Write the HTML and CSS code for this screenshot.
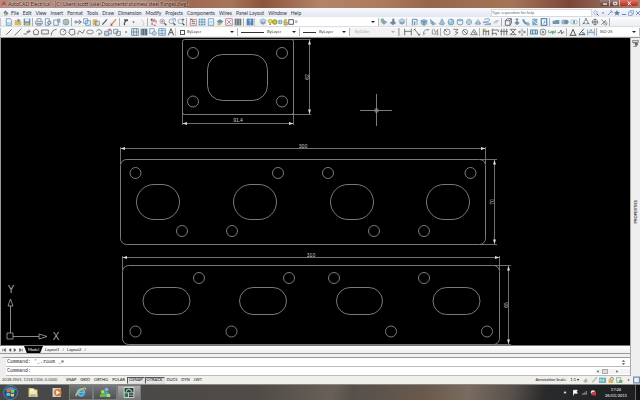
FILE: index.html
```html
<!DOCTYPE html>
<html lang="en">
<head>
<meta charset="utf-8">
<title>AutoCAD Electrical</title>
<link rel="stylesheet" href="styles.css">
</head>
<body>
<header class="titlebar">
  <svg class="app-icon" viewBox="0 0 12 12"><path d="M1 10 6 1l5 9H8L6 6l-2 4z" fill="#b9412f"/><path d="M3 11h7" stroke="#e9d8ae"/></svg>
  <h1 class="title">AutoCAD Electrical - [C:\Users\scott\luke\Documents\stainless steel flanges.dwg]</h1>
  <div class="window-buttons">
    <button aria-label="Minimise"><svg viewBox="0 0 12 8"><path d="M3 5h6" stroke="#fff" stroke-width="2"/></svg></button>
    <button aria-label="Restore"><svg viewBox="0 0 12 8"><path d="M4 2h5v4H4z" fill="none" stroke="#fff" stroke-width="1.5"/></svg></button>
    <button class="close" aria-label="Close"><svg viewBox="0 0 12 8"><path d="m4 1 5 6M9 1 4 7" stroke="#fff" stroke-width="1.6"/></svg></button>
  </div>
</header>

<nav class="menubar">
  <svg class="doc-icon" viewBox="0 0 12 12"><path d="M1 5 5 1l6 6-5 4z" fill="#3f83bd"/><path d="M2 11 5 4l4 7z" fill="#e3b23c"/></svg>
  <button>File</button><button>Edit</button><button>View</button><button>Insert</button><button>Format</button><button>Tools</button><button>Draw</button><button>Dimension</button><button>Modify</button><button>Projects</button><button>Components</button><button>Wires</button><button>Panel Layout</button><button>Window</button><button>Help</button>
  <input class="help-box" type="text" placeholder="Type a question for help" aria-label="Type a question for help">
  <div class="help-tools" data-icons="find drop tool star min restore x"></div>
</nav>

<div class="toolbar">
  <span class="grip"></span>
  <div class="tools" data-icons="new open save | print preview publish globe | cut copy paste brush match | undo drop redo | pan zoomin zoomwin zoomprev | props grid sheet markup calc block | help"></div>
  <span class="grip"></span>
  <div class="tools" data-icons="layers"></div>
  <label class="combo layer-combo"><svg class="layer-state" viewBox="0 0 36 10"><circle cx="4" cy="4" r="2.5" fill="#f4e34d" stroke="#8b8428" stroke-width=".7"/><path d="M3 7h2v2H3z" fill="#777"/><circle cx="10" cy="5" r="3" fill="#cbc631" stroke="#807d1e"/><circle cx="17" cy="5" r="3" fill="#6d93a5"/><path d="M17 1v8M13 5h8" stroke="#d5e7ef"/><path d="M22 5h4v4h-4zM22 5V3q2-3 4 0" fill="#dfd256" stroke="#77733a" stroke-width=".8"/><path d="M28 2h6v6h-6z" fill="#fff" stroke="#333"/></svg>
    <select aria-label="Layer"><option>0</option></select></label>
  <div class="tools" data-icons="layprev layiso layers"></div>
  <span class="grip"></span>
  <div class="tools" data-icons="poly box wedge cone sphere cyl torus pyr helix plane | extrude press sweep loft revolve | union subtract intersect | orbit pan3 move3 |"></div>
</div>

<div class="toolbar">
  <span class="grip"></span>
  <div class="tools" data-icons="line ray pline hexagon rect arc circle cloud spline ellipse earc insert make point hatch grad region table text"></div>
  <span class="grip"></span>
  <label class="combo color-combo"><span class="swatch"></span><select aria-label="Colour"><option>ByLayer</option></select></label>
  <label class="combo linetype-combo"><span class="rule"></span><select aria-label="Line type"><option>ByLayer</option></select></label>
  <label class="combo weight-combo"><span class="rule"></span><select aria-label="Line weight"><option>ByLayer</option></select></label>
  <label class="combo plot-combo"><select aria-label="Plot style" disabled><option>ByColor</option></select></label>
  <span class="grip"></span>
  <div class="tools" data-icons="dlin dalign darc dord | drad djog ddia dang | quick dbase dcont dspace dbreak | tol center inspect jogl | dedit dtedit dupd |"></div>
  <label class="combo style-combo"><select aria-label="Dimension style"><option>ISO-25</option></select></label>
</div>

<div class="workspace">
  <main class="editor">
    <svg class="drawing" viewBox="1 38 629 308" preserveAspectRatio="xMinYMin slice" role="img" aria-label="Flange drawings">
      <defs>
        <marker id="tip" viewBox="0 0 6 4" refX="6" refY="2" markerWidth="5" markerHeight="3" orient="auto-start-reverse" markerUnits="userSpaceOnUse"><path d="M0 0 6 2 0 4z" fill="#ddd"/></marker>
      </defs>
      <g class="part">
        <rect x="182.500" y="39.500" width="111" height="75" rx="2"/>
        <rect x="207.500" y="54.500" width="60" height="46" rx="15"/>
        <circle cx="193" cy="53" r="5.500"/><circle cx="282" cy="53" r="5.500"/><circle cx="193" cy="101.500" r="5.500"/><circle cx="282" cy="101.500" r="5.500"/>
      </g>
      <g class="part">
        <rect x="120.500" y="159.500" width="365" height="85" rx="6"/>
        <rect x="136.500" y="184.500" width="43" height="35" rx="17.500"/><rect x="233.500" y="184.500" width="43" height="35" rx="17.500"/><rect x="330.500" y="184.500" width="43" height="35" rx="17.500"/><rect x="426.500" y="184.500" width="43" height="35" rx="17.500"/>
        <circle cx="135.500" cy="173" r="5.500"/><circle cx="278" cy="173" r="5.500"/><circle cx="328" cy="173" r="5.500"/><circle cx="470.500" cy="173" r="5.500"/>
        <circle cx="182" cy="231" r="5.500"/><circle cx="232" cy="231" r="5.500"/><circle cx="374" cy="231" r="5.500"/><circle cx="424" cy="231" r="5.500"/>
      </g>
      <g class="part">
        <rect x="122.500" y="265.500" width="377" height="79" rx="6"/>
        <rect x="143" y="287.500" width="47" height="27" rx="13.500"/><rect x="239.500" y="287.500" width="47" height="27" rx="13.500"/><rect x="336.500" y="287.500" width="46" height="27" rx="13.500"/><rect x="433" y="287.500" width="47" height="27" rx="13.500"/>
        <circle cx="199" cy="278" r="5.500"/><circle cx="289" cy="278" r="5.500"/><circle cx="334" cy="278" r="5.500"/><circle cx="424" cy="278" r="5.500"/>
        <circle cx="135.500" cy="331.500" r="5.500"/><circle cx="231.500" cy="331.500" r="5.500"/><circle cx="391" cy="331.500" r="5.500"/><circle cx="487" cy="331.500" r="5.500"/>
      </g>
      <g class="extension">
        <path d="M182.500 112v13M293.500 112v13M291 39.500h20M291 114.500h20"/>
        <path d="M120.500 164v-17M485.500 164v-17M480 159.500h17M480 244.500h17"/>
        <path d="M122.500 270v-14M499.500 270v-14M494 265.500h17M494 344.500h17"/>
      </g>
      <g class="dimension">
        <path d="M182.500 123.500h111"/><path d="M309.500 40v74"/>
        <path d="M120.500 148.500h365"/><path d="M494.500 160v84"/>
        <path d="M122.500 257.500h377"/><path d="M508.500 266v78"/>
      </g>
      <g class="label">
        <text x="238" y="122">91.4</text>
        <text transform="translate(309 77) rotate(-90)">62</text>
        <text x="303" y="148">300</text>
        <text transform="translate(494 202) rotate(-90)">70</text>
        <text x="311" y="257">310</text>
        <text transform="translate(508 305) rotate(-90)">65</text>
      </g>
      <path class="cursor" d="M360 110.500h32M376.500 94v32M375 109h3v3h-3z"/>
      <g class="ucs">
        <path d="M7 333h6v6H7zM10.500 333v-27M8 306h5l-2.500-7zM13 336.500h26M39 334v5l8-2.500z"/>
        <text x="11" y="293">Y</text><text x="56" y="340">X</text>
      </g>
    </svg>
    <div class="sheet-tabs">
      <div class="tab-nav">
        <button aria-label="First"><svg viewBox="0 0 8 8"><path d="M1 1v6M7 1 3 4l4 3z"/></svg></button>
        <button aria-label="Previous"><svg viewBox="0 0 8 8"><path d="M6 1 2 4l4 3z"/></svg></button>
        <button aria-label="Next"><svg viewBox="0 0 8 8"><path d="m2 1 4 3-4 3z"/></svg></button>
        <button aria-label="Last"><svg viewBox="0 0 8 8"><path d="m1 1 4 3-4 3zM7 1v6"/></svg></button>
      </div>
      <button class="tab active">Model</button>
      <button class="tab">Layout1</button><span class="slash">/</span>
      <button class="tab">Layout2</button><span class="slash">/</span>
    </div>
    <section class="command">
      <div class="history"><span>Command: '_.zoom _e</span><svg class="spin" viewBox="0 0 6 8"><path d="m1 3 2-2 2 2zM1 5l2 2 2-2z"/></svg></div>
      <div class="prompt"><label for="cmd">Command:</label><input id="cmd" type="text">
        <div class="hscroll"><svg viewBox="0 0 6 6"><path d="M4 1 1 3l3 2z"/></svg><span class="thumb"></span><svg viewBox="0 0 6 6"><path d="m2 1 3 2-3 2z"/></svg></div></div>
    </section>
  </main>
  <aside class="palette">
    <svg viewBox="0 0 12 12"><path d="M1 1h10v3H1zM2 5h5v6H2M8 5v6" fill="none" stroke="#444"/><path d="M5 5h5v4H5z" fill="#666"/></svg>
    <h2>PROPERTIES</h2>
  </aside>
</div>

<div class="status">
  <output class="coords">2038.3945, 1338.1306, 0.0000</output>
  <button>SNAP</button><button>GRID</button><button>ORTHO</button><button>POLAR</button><button class="on">OSNAP</button><button class="on">OTRACK</button><button>DUCS</button><button>DYN</button><button>LWT</button>
  <div class="scale"><span>Annotation Scale:</span><button>1:1 ▾</button></div>
  <div class="status-tools" data-icons="annot annotadd comm lock tray drop clean"></div>
</div>

<footer class="taskbar">
  <button class="orb" aria-label="Start"><svg viewBox="0 0 16 16"><circle cx="8" cy="8" r="7.500" fill="#1e4f78" stroke="#8aa6b5" stroke-width=".6"/><path d="M2 5q6-6 12 0-6 3-12 0" fill="#79abc5" opacity=".7"/><path d="M4 5q2-1.500 3.500-.3V8Q5.500 7 3.500 8z" fill="#e5663b"/><path d="M8.300 5q2 1 4-.2L12 8q-2 1-3.700 0z" fill="#8fc755"/><path d="M3.500 8.800q2-1 4 0v3Q6 11 4 12z" fill="#63b8ec"/><path d="M8.300 9q2 1 3.700 0l-.5 3q-1.500.8-3.200 0z" fill="#f4cf4c"/></svg></button>
  <button aria-label="Explorer"><svg viewBox="0 0 16 16"><path d="M2 2h6l1 2h5v10H2z" fill="#d8b65c"/><path d="M3 5h10v7H3z" fill="#f7e9ae"/><path d="M4 3h6v3H4z" fill="#eaf3e4"/><path d="M3 10h11v4H3z" fill="#e7ca73"/><path d="M5 11h6v3H5z" fill="#8dbad0"/></svg></button>
  <button aria-label="Media player"><svg viewBox="0 0 16 16"><path d="M2 2h11v12H2z" fill="#b9cbd8"/><path d="M3 3h9v10H3z" fill="#d9e2e7"/><circle cx="9" cy="8" r="5" fill="#de7a2b"/><path d="m7 5 5 3-5 3z" fill="#fff"/></svg></button>
  <button class="running" aria-label="Internet Explorer"><svg viewBox="0 0 16 16"><path d="M12 10a4.500 4.500 0 1 1 .5-2H5" fill="none" stroke="#58bdf0" stroke-width="2.600"/><path d="M2 13Q-1 10 8 4q7-4 6 0" fill="none" stroke="#edc64b" stroke-width="1.500"/></svg></button>
  <button class="running" aria-label="Messenger"><svg viewBox="0 0 16 16"><circle cx="10" cy="4" r="2.500" fill="#71b8d9"/><path d="M6 13q0-6 4-6t4 6z" fill="#4e9dc5"/><circle cx="5" cy="7" r="2.500" fill="#a6dc62"/><path d="M1 14q0-5 4-5t4 5z" fill="#6dbb3b"/><path d="M10 10h5v4h-5z" fill="#a5e074"/></svg></button>
  <button class="running current" aria-label="AutoCAD"><svg viewBox="0 0 16 16"><path d="M1 1h14v14H1z" fill="#e9efed"/><path d="M2 2h12v6H2z" fill="#284238"/><path d="M4 7q3-7 8 0" fill="none" stroke="#9bd49f" stroke-width="1.500"/><path d="M2 9h5v5H2z" fill="#2a7051"/><path d="M8 10h6M8 13h6" stroke="#24332d" stroke-width="2"/></svg></button>
  <div class="tray">
    <svg viewBox="0 0 8 8"><path d="m2 5 2-3 2 3z" fill="#eee"/></svg>
    <svg viewBox="0 0 8 8"><path d="M2 1v7M2 1h5L6 3l1 2H2" fill="#fff" stroke="#fff"/></svg>
    <svg viewBox="0 0 8 8"><path d="M1 6h1M3 5v2M5 4v3M7 2v5" stroke="#ccc"/></svg>
    <svg viewBox="0 0 8 8"><circle cx="4" cy="4" r="3" fill="#eee"/><path d="M4 3h4v5H4L1 5z" fill="#cf3540"/></svg>
  </div>
  <div class="clock"><span>17:24</span><span>26/01/2011</span></div>
  <button class="desktop" aria-label="Show desktop"></button>
</footer>
<script src="icons.js"></script>
</body>
</html>
```
FILE: styles.css
```css
* { box-sizing: border-box; }
html, body { height: 100%; }
body {
  margin: 0;
  display: flex;
  flex-direction: column;
  font: 5px/8px Lato, "Liberation Sans", sans-serif;
  color: #333;
  background: #f0f0f0;
  overflow: hidden;
}
button, input, select { font: inherit; color: inherit; border: 0; padding: 0; margin: 0; background: none; border-radius: 0; outline: 0; }
button { display: flex; align-items: center; justify-content: center; white-space: nowrap; }
svg { display: block; }
h1, h2 { margin: 0; font: inherit; }

.titlebar {
  display: flex;
  flex: none;
  height: 8px;
  gap: 1px;
  padding-left: 1px;
  background: linear-gradient(90deg, #b3897f 0%, #b58c80 22%, #9c6951 29%, #a77559 36%, #8b543b 41%, #b38468 50%, #ad7a5c 60%, #96664c 67%, #a57557 80%, #7b4738 89%, #a98470 100%);
}
.app-icon { width: 6px; height: 7px; }
.title { flex: 1; color: #2e1c1a; text-shadow: 0 0 2px #f1dcd5, 0 0 3px #f1dcd5; }
.window-buttons { display: flex; height: 6px; margin-right: 2px; border-radius: 0 0 2px 2px; overflow: hidden; }
.window-buttons button { width: 10px; background: linear-gradient(#a3827a, #5d413f); border-right: 1px solid #cdb8b0; }
.window-buttons svg { width: 8px; height: 5px; }
.window-buttons .close { width: 18px; background: linear-gradient(#d9766a, #b32d20); border: 0; }

.menubar { display: flex; flex: none; height: 9px; align-items: center; gap: 4px; padding-left: 3px; background: linear-gradient(#f7f8fc, #e3e7f3); }
.menubar > button { height: 8px; }
.doc-icon { width: 6px; height: 8px; margin-right: -2px; }
.help-box { width: 101px; height: 8px; margin-left: auto; background: #fff; border: 1px solid #d5d9e4; font-size: 4px; line-height: 6px; }
.help-box::placeholder { color: #666; opacity: 1; }
.help-tools { display: flex; width: 48px; margin-left: -4px; justify-content: space-between; }

.toolbar { display: flex; flex: none; height: 10px; align-items: center; background: linear-gradient(#fbfbfc, #eceef1); border-bottom: 1px solid #dcdee2; }
.toolbar + .toolbar { height: 11px; border-bottom-color: #999; }
.grip { flex: none; width: 3px; height: 8px; margin-right: 1px; border-left: 1px solid #c3c6cc; }
.tools { display: flex; flex: none; align-items: center; }
.tool { width: 9px; height: 9px; flex: none; }
.tool svg { width: 8px; height: 8px; opacity: 0.8; }
.tool.small { width: 7px; }
.help-tools .tool, .status-tools .tool { width: 7px; }
.help-tools .tool svg { width: 6px; height: 6px; }
.divider { flex: none; width: 1px; height: 8px; margin: 0 1px; background: #aaaeb5; }

.combo { position: relative; display: flex; flex: none; align-items: center; height: 8px; background: #fff; border-right: 1px solid #b5b8be; font-size: 4px; }
.combo::after { content: ""; position: absolute; right: 3px; top: 3px; border: 2px solid transparent; border-top-color: #222; border-bottom: 0; pointer-events: none; }
.combo select { appearance: none; flex: 1; min-width: 0; height: 8px; padding-left: 2px; line-height: 8px; }
.layer-combo { width: 112px; }
.layer-combo select { padding-left: 0; }
.layer-state { width: 28px; height: 8px; }
.color-combo { width: 59px; }
.swatch { width: 5px; height: 5px; margin-left: 1px; border: 1px solid #555; }
.linetype-combo { width: 62px; }
.weight-combo { width: 50px; }
.rule { width: 23px; height: 1px; margin: 0 1px 0 3px; background: #333; }
.weight-combo .rule { width: 13px; }
.plot-combo { width: 49px; background: #f2f2f2; color: #aaa; }
.plot-combo select { padding-left: 5px; opacity: 1; }
.plot-combo::after { border-top-color: #aaa; }
.style-combo { flex: 1; }

.workspace { display: flex; flex: 1; min-height: 0; }
.editor { display: flex; flex: 1; flex-direction: column; min-width: 0; }
.drawing { flex: 1; width: 100%; min-height: 0; background: #000; border-left: 1px solid #999; }
.part { fill: none; stroke: #989898; stroke-width: 0.8px; }
.extension, .dimension { fill: none; stroke: #8b8b8b; stroke-width: 0.8px; }
.dimension path { marker-start: url(#tip); marker-end: url(#tip); }
.label { fill: #ccc; font: 5px "Liberation Sans", sans-serif; text-anchor: middle; }
.cursor { fill: none; stroke: #999; stroke-width: 0.8px; }
.ucs { fill: none; stroke: #aaa; stroke-width: 0.8px; }
.ucs text { fill: #aaa; stroke: none; font: 10px "Liberation Sans", sans-serif; text-anchor: middle; }

.sheet-tabs { display: flex; flex: none; height: 9px; align-items: center; border-top: 1px solid #777; border-bottom: 1px solid #999; background: linear-gradient(#fff, #eee); color: #111; font-size: 4px; }
.tab-nav { display: flex; width: 24px; padding-left: 1px; }
.tab-nav button { width: 6px; height: 7px; }
.tab-nav svg { width: 4px; height: 4px; fill: #555; stroke: #555; }
.tab { height: 7px; padding: 0 1px; }
.tab.active { width: 19px; margin-right: 1px; background: #000; color: #fff; clip-path: polygon(0 0, 100% 0, 85% 100%, 15% 100%); }
.slash { padding: 0 2px; }

.command { flex: none; margin-top: 3px; border-top: 1px solid #999; border-left: 6px solid #eee; background: #fff; font: 5px/8px "Liberation Mono", monospace; }
.history, .prompt { display: flex; height: 9px; align-items: center; padding-left: 1px; border-bottom: 1px solid #bbb; white-space: pre; }
.spin { width: 5px; height: 7px; margin: 0 4px 0 auto; fill: #555; }
.prompt input { flex: 1; min-width: 0; height: 7px; }
.hscroll { display: flex; width: 35px; align-items: center; gap: 2px; padding-left: 1px; background: #f3f3f3; }
.hscroll svg { width: 4px; height: 5px; fill: #555; }
.thumb { width: 6px; height: 5px; margin-right: 5px; border: 1px solid #aaa; background: #ddd; }

.palette { display: flex; flex: none; flex-direction: column; align-items: center; width: 10px; padding-top: 2px; background: #efefef; border-left: 1px solid #aaa; }
.palette svg { width: 7px; height: 7px; }
.palette h2 { margin: auto; writing-mode: vertical-rl; transform: rotate(180deg); font-size: 4px; font-weight: 700; }

.status { display: flex; flex: none; height: 9px; align-items: center; padding-left: 2px; background: #f0efec; border-bottom: 1px solid #888; color: #111; font-size: 4px; }
.coords { flex: none; width: 62px; color: #444; white-space: nowrap; }
.status > button { height: 7px; padding: 0 1px; border: 1px solid transparent; }
.status > .on { border-color: #555 #ddd #ddd #555; background: #e4e4e4; }
.scale { display: flex; gap: 4px; margin-left: auto; margin-right: 3px; align-items: center; white-space: nowrap; }
.status-tools { display: flex; justify-content: space-between; width: 58px; }

.taskbar { display: flex; flex: none; height: 15px; align-items: center; background: linear-gradient(100deg, #46474a 0%, #4a4947 20%, #504b46 40%, #686058 52%, #57504a 55%, #69594d 66%, #7a6b5f 73%, #57504a 80%, #292a2b 85%, #1b1d20 100%); color: #fff; }
.taskbar > button { width: 24px; height: 15px; }
.taskbar > button svg { width: 12px; height: 13px; }
.taskbar > .orb { width: 21px; }
.taskbar > .orb svg { width: 15px; height: 15px; }
.taskbar > .running { border: 1px solid #77797a; background: linear-gradient(#737577, #4e5052); }
.taskbar > .current { background: linear-gradient(#aaa, #777); }
.tray { display: flex; gap: 3px; margin-left: auto; }
.tray svg { width: 6px; height: 7px; }
.tray svg:first-child { margin-right: 1px; }
.clock { display: flex; flex-direction: column; width: 34px; margin-left: 3px; align-items: center; font-size: 4px; line-height: 6px; }
.taskbar > .desktop { width: 5px; margin-left: 2px; border-left: 1px solid #666; background: #111; }
```
FILE: icons.js
```js
const B = '#3f78a8', D = '#333', Y = '#d9ac38', R = '#bf4c58', G = '#4c9465', L = '#b6cedf';
const s = (d, c = D, w = 1.2) => `<path d="${d}" fill="none" stroke="${c}" stroke-width="${w}"/>`;
const f = (d, c = B) => `<path d="${d}" fill="${c}"/>`;
const o = (x, y, r, c = B, fill = 'none') => `<circle cx="${x}" cy="${y}" r="${r}" fill="${fill}" stroke="${c}"/>`;
const lens = s('M8 8l3 3', D, 2) + o(5, 5, 3.5, '#607b90', '#e4f0f7');
const icons = {
  new: s('M2 1h6l2 3v7H2z', B) + f('M3 6h6v4H3z', L),
  open: f('M1 3h4l1 2h5v6H1z', Y) + f('M5 1l5 2-4 4z', B),
  save: f('M1 1h10v10H1z', B) + f('M3 1h6v4H3z', '#e8eef3') + f('M3 7h6v4H3z', Y),
  print: s('M3 5V1h6v4M1 5h10v4H1zM3 8h6v3H3z', '#56708a'),
  preview: s('M2 1h6v10H2z', B) + o(8, 7, 2.5, D, L),
  publish: s('M1 3h7v8H1z', B) + f('M6 1h5v6H6z', '#8294a4'),
  globe: o(6, 6, 4.5, B, '#81b1ce') + s('M2 7Q6 1 10 5', Y, 1.8),
  cut: s('M1 6h9M7 3l4 3-4 3', D) + o(3, 6, 1.8, B),
  copy: s('M1 1h6v7H1zM4 4h7v7H4z', B),
  paste: f('M1 2h7v9H1z', Y) + s('M5 5h6v6H5z', B),
  brush: s('M2 10 9 2', D, 1.8),
  match: s('M2 10 9 2', '#c48a2e', 2.2) + f('M1 8l3 3-3 1z', D),
  undo: s('M4 11Q2 5 9 3M3 3h6', D, 2),
  redo: s('M8 11Q10 5 4 2', '#bbb'),
  drop: f('M4 5h4L6 8z', D), point: f('M5 5h2v2H5z', D),
  pan: s('M3 11V5M5 6V2M7 6V1M9 8V3M3 8l3 3h3', R, 1.4) + f('M1 1h3v3H1z', D),
  zoomin: lens + s('M5 3v4M3 5h4', R), zoomwin: lens + s('M7 1h4v4', B), zoomprev: lens + s('M8 2h3M9 1v4', D),
  props: s('M2 2h9v9H2z', R) + s('M4 5h5M4 8h5M2 1l4 3', D),
  grid: f('M1 1h10v10H1z', B) + s('M1 4h10M1 8h10M4 1v10M8 1v10', '#d8e8ef'),
  sheet: s('M2 1h8v10H2z', B) + f('M4 4h4v4H4z', L),
  markup: f('M1 5l5-3 5 3-5 5z', B) + f('M2 7h5v4H2z', Y),
  calc: s('M1 1h10v10H1z', R) + s('M3 3l6 6M9 3L3 9', B),
  block: f('M1 1h10v10H1z', '#4f5964') + s('M4 1v10M8 1v10', '#a8b4bf'),
  help: f('M1 1h10v10H1z', '#2868a3') + s('M4 4q4-3 3 1L6 7M6 8v2', '#fff'),
  layers: f('M1 7l5-2 5 2-5 3z', '#6c8b9f') + f('M1 4l5-3 5 3-5 3z', L) + s('M1 4l5-3 5 3-5 3z', B, .8),
  layprev: f('M1 6l5-3 5 3-5 4z', '#718fa1') + f('M1 1h5v4H1z', '#68a56d'),
  layiso: f('M1 7l5-3 5 3-5 4z', B) + f('M5 1h3v6H5z', '#566'),
  poly: s('M2 2v9M2 2h7v8M5 5v6', B, 1.5) + f('M6 5h4v5H6z', L),
  box: f('M1 4l5-3 5 3v5l-5 3-5-3z', '#7fa6c2') + s('M1 4l5 2 5-2M6 6v5', '#325f83'),
  wedge: f('M2 2l9 7-5 2-4-3z', '#78a0bc') + s('M2 2l4 5v4', B),
  cone: f('M6 1l4 8q-4 3-8 0z', '#8fb4cd') + s('M6 1l4 8q-4 3-8 0z', B, .8),
  sphere: o(6, 6, 4.5, B, '#8eb6cf') + f('M3 3h3v2H3z', '#deedf5'),
  cyl: s('M2 3q4-3 8 0v6q-4 3-8 0zM2 3q4 3 8 0', B),
  torus: o(6, 6, 4, '#477ba3') + o(6, 6, 2, '#477ba3'),
  pyr: f('M6 1l5 8-5 2-5-2z', '#6896b7') + s('M6 1v10', '#e4edf2'),
  helix: s('M2 2q8-2 8 1T2 6t8 2-8 2', B), plane: f('M1 8l5-5h5L7 8z', '#afc0cd'),
  extrude: s('M2 4h7v7H2zM2 4l3-3h6v7L9 11M9 4l2-3', '#3b4a56', 1.4),
  press: f('M2 7l4-2 4 2-4 4z', B) + s('M6 6V1M4 3l2-2 2 2', '#333'),
  sweep: s('M2 2q0 6 7 7', B, 3) + o(9, 9, 2, B, L), loft: f('M2 1h8L9 6l1 5H2z', '#6598b8') + s('M3 3l6 6', '#fff'),
  revolve: s('M2 1h8v10H2z', B, 2) + s('M5 8q4-1 2-4', '#3a718f'),
  union: f('M1 4h6v5H1zM5 3h6v6H5z', '#44869a'), subtract: o(4, 6, 3, B, '#8fb9c5') + o(8, 6, 3, B, '#437c8c'),
  intersect: o(4, 6, 3, '#769eae') + o(8, 6, 3, '#769eae') + f('M5 4h2v4H5z', '#397a8a'),
  orbit: o(6, 6, 3) + s('M6 0v4M1 9l3-2M11 9 8 7', D, 1.5),
  pan3: o(6, 6, 4, '#555') + s('M6 1v10M1 6h10', D),
  move3: s('M2 2l8 8M2 10l7-7', '#555') + o(8, 8, 2.5, '#776060'),
  line: s('M2 10 10 2'), ray: s('M1 11 11 1', '#344'), pline: s('M1 9h4Q8 8 6 5h4M8 3l3 2-3 2'),
  hexagon: s('M6 1.500l4 3L9 10H3L2 4.500z'), rect: s('M1 3h10v6H1z'), arc: s('M2 11Q2 3 10 2'),
  circle: o(6, 6, 4.5, D) + s('M6 6l3-3', B), cloud: s('M3 9Q0 8 2 5q0-4 4-3 5-1 4 4 2 4-2 4-3 2-5-1'),
  spline: s('M1 10q2-9 5-4t5-4'), ellipse: '<ellipse cx="6" cy="6" rx="5" ry="3" fill="none" stroke="#333"/>',
  earc: s('M2 5q4-5 8 0 1 4-4 4M6 7v4', D), insert: f('M1 5h6v6H1z', L) + s('M1 5h6v6H1zM5 3h6v6H7', '#496376') + f('M7 1h3v3H7z', R),
  make: s('M1 2h6v6H1zM5 5h6v6H5z', '#496376'), hatch: s('M1 1h10v10H1zM4 1v10M8 1v10M1 6h10', '#3a5f7c'),
  grad: f('M1 1h10v10H1z', '#314c62') + s('M3 1v10M7 1v10', '#8fa6b7'), region: s('M1 1h7v7H1z', B) + o(8, 8, 3, B, L),
  table: s('M1 1h10v10H1zM1 4h10M1 8h10M6 1v10', B), text: s('M2 11 6 1l4 10M3.500 7h5', D, 1.5),
  dlin: s('M1 1v10M11 1v10M1 5h10', D), dalign: s('M1 3l3-2M8 11l3-2M2 2l7 8M7 9l3 2', D), darc: s('M2 9q0-7 8-7M2 11 5 7M8 4l3-2', '#666'),
  dord: s('M2 2v7h8M4 1l3 6 3-5v9', '#666'), drad: o(6, 6, 4.5, '#444') + s('M6 6 2 2', D), djog: s('M2 2h7L5 6l4 1-5 4', '#444'),
  ddia: o(6, 6, 4, '#444') + s('M3 3l6 6', D), dang: s('M1 10 6 2l5 8zM4 6q3-1 4 3', '#444'),
  quick: s('M2 1v10M6 3v8M10 3v8M2 5h8', D) + f('M3 1h3v4H3z', Y), dbase: s('M2 1v10M2 3h9v3M2 8h6v3', D),
  dcont: s('M2 1v10M6 1v10M10 1v10M0 5h12', D), dspace: s('M1 2h10M1 10h10M3 3l6 6M9 3 3 9', D), dbreak: s('M6 1v4M6 8v4M1 6h4M7 6h4M3 4l-2 2 2 2M9 4l2 2-2 2', '#444'),
  tol: s('M1 3h10v6H1zM4 3v6M8 3v6', '#2e6f96', 1.7), center: o(6, 6, 4.5, D) + s('M4 6h4M6 4v4', D), inspect: s('M1 3v4h10V3M4 5h5', '#385') + f('M5 5h5L7 10z', G),
  jogl: s('M1 7h3l2-4 1 6 2-3h2', D), dedit: s('M2 11 6 2l4 9M1 11h10', D, 1.5), dtedit: s('M1 10h10M2 9l7-8M6 7l4 1', D, 1.5), dupd: s('M1 2v9M11 1v10M1 7h10M4 6l2-4 2 4', B),
  find: lens, tool: s('M2 10l7-7M6 2h4v4', '#536b8a', 1.5), star: f('M6 0l2 4h4L9 7l1 4-4-2-4 2 1-4-3-3h4z', '#496187'),
  min: s('M2 9h8', B, 2), restore: s('M1 4h7v7H1zM4 4V1h7v7H8', B), x: s('M2 2l8 8M10 2 2 10', B, 1.8),
  annot: f('M2 8l5-5 3 5-4 3z', '#a7a9a7'), annotadd: s('M2 10 7 5l3-4', '#a5a396', 2), comm: f('M0 2h12v9H0z', '#3ca4a0') + s('M2 9V4l3 4 3-4v5', '#e4f8f5'),
  lock: f('M1 5h8v6H1z', '#d7a332') + s('M4 5V3q3-4 5 0v3', D), tray: s('M1 2h7v8H1z', G) + f('M5 6h6v5H5z', '#5a9c65'), clean: s('M1 1h10v10H1z', '#5077a8', 2)
};

document.querySelectorAll('[data-icons]').forEach(bar => {
  bar.innerHTML = bar.dataset.icons.split(' ').map(name => name === '|'
    ? '<span class="divider"></span>'
    : `<button class="tool${name === 'drop' ? ' small' : ''}" aria-label="${name}"><svg viewBox="0 0 12 12">${icons[name]}</svg></button>`).join('');
});
```
